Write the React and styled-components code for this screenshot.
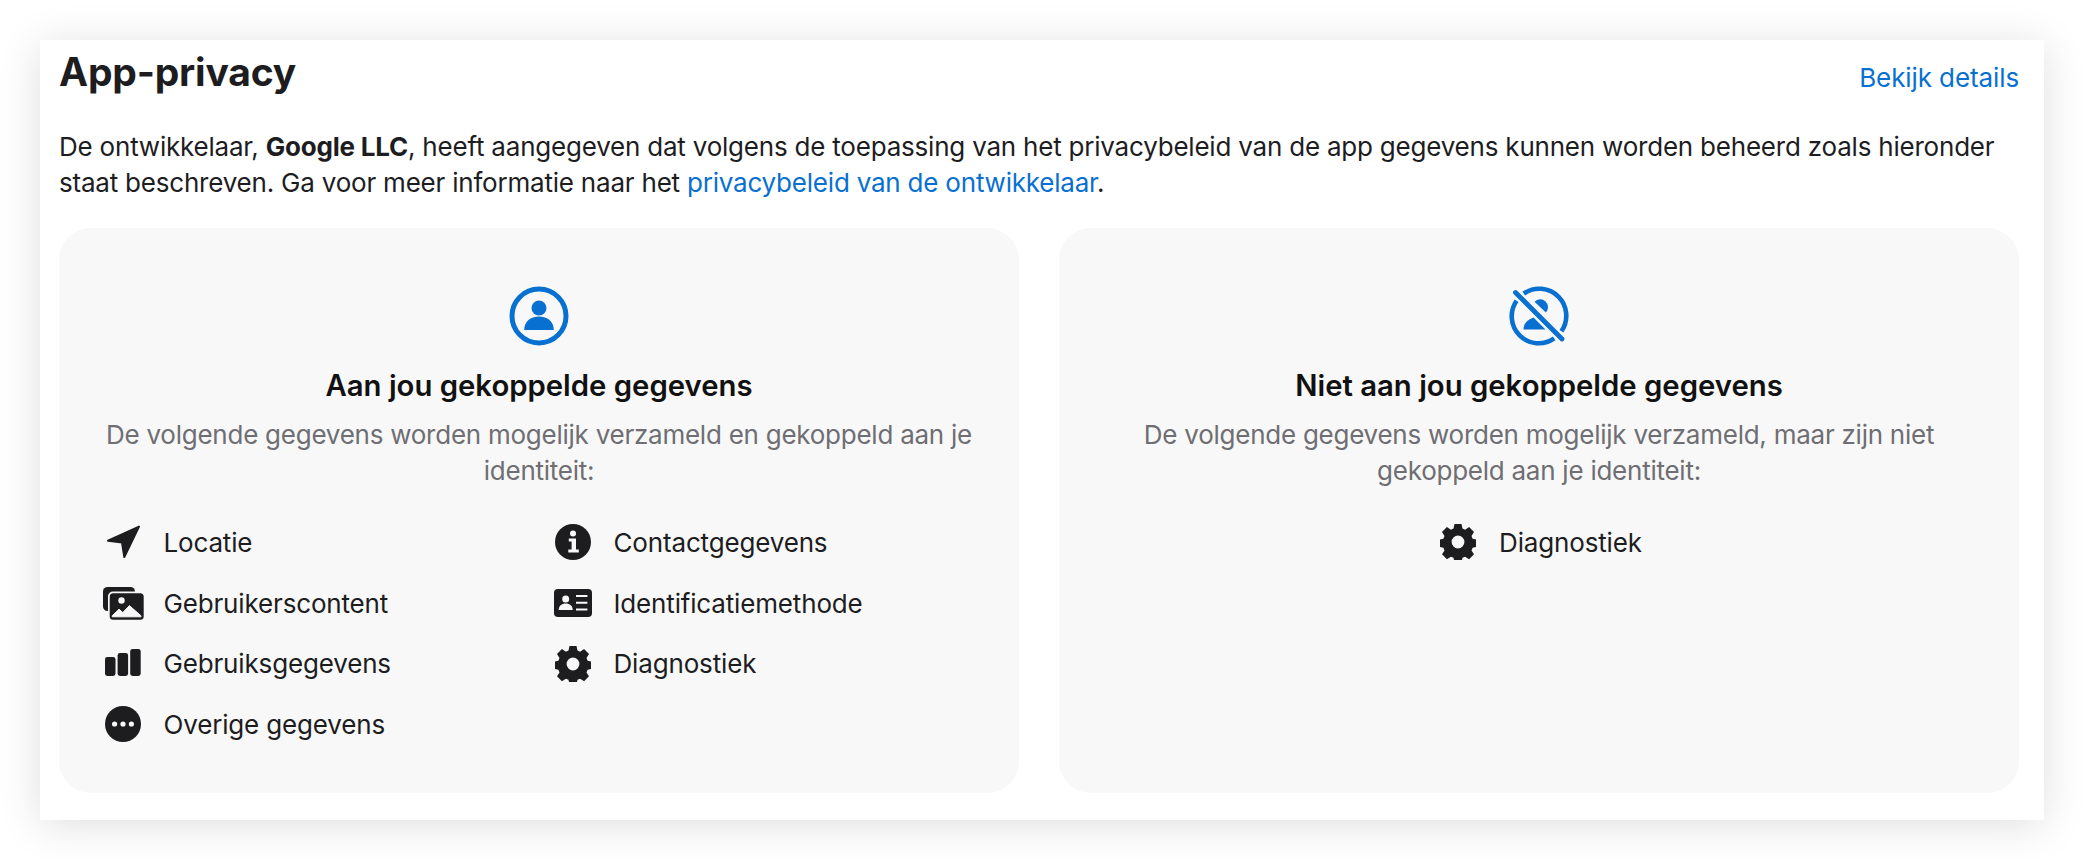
import React from 'react';
import styled, { createGlobalStyle } from 'styled-components';

const Global = createGlobalStyle`
  html, body { margin: 0; padding: 0; background: #fff; }
  body { font-family: Inter, "Noto Sans", "Liberation Sans", sans-serif; color: #1d1d1f; }
`;

const Ink = '#1d1d1f';
const Bg = '#f8f8f8';
const Blue = '#0870d1';

const LocationIcon = () => (
  <svg viewBox="0 0 36 36" width="36" height="36">
    <path d="M34 2.600 3 16.700 17 18.500l2.300 14.500z" fill={Ink} stroke={Ink} strokeWidth="2" strokeLinejoin="round" />
  </svg>
);

const PhotoIcon = () => (
  <svg viewBox="0 0 42 36" width="42" height="36">
    <rect x="1" y="2" width="32" height="24" rx="4.500" fill={Ink} />
    <rect x="6" y="6.500" width="37" height="30" rx="5" fill={Bg} />
    <rect x="7.700" y="8.300" width="34" height="26.400" rx="3.500" fill={Ink} />
    <circle cx="19.500" cy="15.500" r="3.200" fill={Bg} />
    <path d="M10.200 31.800v-1l6.800-6.600 3.800 3.400 6.600-7 11.600 10.200v1z" fill={Bg} stroke={Bg} strokeLinejoin="round" />
  </svg>
);

const BarsIcon = () => (
  <svg viewBox="0 0 36 36" width="36" height="36">
    <rect x="0" y="11" width="10.500" height="19" rx="2.400" fill={Ink} />
    <rect x="12.600" y="7" width="10.500" height="23" rx="2.400" fill={Ink} />
    <rect x="25.200" y="3" width="10.500" height="27" rx="2.400" fill={Ink} />
  </svg>
);

const DotsIcon = () => (
  <svg viewBox="0 0 36 36" width="36" height="36">
    <circle cx="18" cy="18" r="18" fill={Ink} />
    <circle cx="9.600" cy="18" r="2.600" fill={Bg} />
    <circle cx="18" cy="18" r="2.600" fill={Bg} />
    <circle cx="26.400" cy="18" r="2.600" fill={Bg} />
  </svg>
);

const InfoIcon = () => (
  <svg viewBox="0 0 36 36" width="36" height="36">
    <circle cx="18" cy="18" r="18" fill={Ink} />
    <circle cx="18" cy="9.600" r="3" fill={Bg} />
    <path d="M13.800 14.500h7.200v11h2.800v3H13.300v-3h3.300v-8h-2.800z" fill={Bg} />
  </svg>
);

const IdIcon = () => (
  <svg viewBox="0 0 38 28" width="38" height="28">
    <rect width="38" height="28" rx="4" fill={Ink} />
    <circle cx="11.700" cy="10" r="3.500" fill={Bg} />
    <path d="M4.700 21c0-4 3-6.400 7-6.400s7 2.400 7 6.400z" fill={Bg} />
    <path d="M22 6h11.400v2H22zM22 12.800h11.400v2H22zM22 19.400h11.400v2H22z" fill={Bg} />
  </svg>
);

const GearIcon = () => (
  <svg viewBox="0 0 36 36" width="36" height="36">
    <path
      fillRule="evenodd"
      fill={Ink}
      d="M14.500 0h7l1 4.600 2.600 1.100 4-2.600 4.900 5-2.500 3.900 1.100 2.700 4.400 1v7l-4.400 1-1.100 2.700 2.500 3.900-4.900 5-4-2.600-2.600 1.100-1 4.700h-7l-1-4.700-2.600-1.100-4 2.600-4.900-5 2.500-3.900-1.100-2.700-4.400-1v-7l4.400-1 1.100-2.700-2.500-3.900 4.900-5 4 2.600 2.600-1.100zM18 11.600a6.400 6.400 0 1 0 0 12.800 6.400 6.400 0 0 0 0-12.800z"
    />
  </svg>
);

const PersonIcon = () => (
  <svg viewBox="0 0 60 60" width="60" height="60">
    <circle cx="30" cy="30" r="27" fill="none" stroke={Blue} strokeWidth="5" />
    <circle cx="30" cy="22" r="7.500" fill={Blue} />
    <path d="M15.200 44c0-8.400 6.400-13.400 14.800-13.400S44.800 35.600 44.800 44z" fill={Blue} />
  </svg>
);

const PersonOffIcon = () => (
  <svg viewBox="0 0 60 60" width="60" height="60">
    <path d="M14.800 7.600A27 27 0 0 1 52.400 45.200M45.200 52.400A27 27 0 0 1 7.600 14.800" fill="none" stroke={Blue} strokeWidth="4.600" />
    <path d="M25.500 15.800a7.800 7.800 0 0 1 11.400 10.700z" fill={Blue} />
    <path d="M14.500 43.500c0-5.500 3.500-10 10-12l12 12z" fill={Blue} />
    <path d="M6.500 6.500 53 53" stroke={Blue} strokeWidth="4.800" strokeLinecap="round" />
  </svg>
);

const Page = styled.main`
  box-sizing: border-box;
  width: 2084px;
  height: 860px;
  padding: 40px;
  overflow: hidden;
`;

const Panel = styled.section`
  box-sizing: border-box;
  height: 780px;
  padding: 0 25px 0 19px;
  background: #fff;
  box-shadow: 0 5px 40px rgba(0, 0, 0, 0.13);
`;

const Head = styled.header`
  display: flex;
  justify-content: space-between;
  align-items: flex-start;
  height: 70px;
`;

const Title = styled.h2`
  margin: 0;
  font-size: 39px;
  line-height: 64px;
  font-weight: 700;
  color: #1d1d1f;
  letter-spacing: -0.2px;
`;

const Link = styled.a`
  color: ${Blue};
  font-size: 26px;
  letter-spacing: ${(p) => (p.$top ? '-0.1px' : 'inherit')};
  text-decoration: none;
  line-height: ${(p) => (p.$top ? '76px' : 'inherit')};
`;

const Intro = styled.p`
  margin: 0 0 27px;
  padding-top: 19px;
  font-size: 26px;
  line-height: 36px;
  letter-spacing: -0.21px;
  color: #1d1d1f;
  b { font-weight: 700; }
`;

const Cards = styled.div`
  display: grid;
  grid-template-columns: 960px 960px;
  gap: 40px;
`;

const Card = styled.article`
  box-sizing: border-box;
  height: 565px;
  padding: 57.500px 40px 0;
  background: ${Bg};
  border-radius: 32px;
  text-align: center;
`;

const HeroIcon = styled.div`
  display: flex;
  justify-content: center;
  height: 60px;
  margin-bottom: 18.500px;
`;

const CardTitle = styled.h3`
  margin: 0 0 9px;
  font-size: 29.300px;
  line-height: 44px;
  font-weight: 600;
  color: #111;
`;

const CardText = styled.p`
  margin: 0 0 23px;
  font-size: 26px;
  line-height: 36px;
  letter-spacing: -0.25px;
  color: #6e6e73;
`;

const List = styled.ul`
  list-style: none;
  margin: 0;
  padding: 0 0 0 ${(p) => (p.$single ? '0' : '1.5px')};
  display: grid;
  grid-template-columns: ${(p) => (p.$single ? 'max-content' : '450px 1fr')};
  justify-content: ${(p) => (p.$single ? 'center' : 'start')};
  grid-auto-rows: 60.700px;
  text-align: left;
`;

const Item = styled.li`
  display: flex;
  align-items: center;
  gap: 19px;
  font-size: 26px;
  letter-spacing: -0.16px;
  color: #1d1d1f;
`;

const IconBox = styled.span`
  display: flex;
  justify-content: center;
  align-items: center;
  width: 44px;
  height: 44px;
`;

const left = [
  [LocationIcon, 'Locatie'],
  [InfoIcon, 'Contactgegevens'],
  [PhotoIcon, 'Gebruikerscontent'],
  [IdIcon, 'Identificatiemethode'],
  [BarsIcon, 'Gebruiksgegevens'],
  [GearIcon, 'Diagnostiek'],
  [DotsIcon, 'Overige gegevens'],
];

export default function App() {
  return (
    <Page>
      <Global />
      <Panel>
        <Head>
          <Title>App-privacy</Title>
          <Link $top href="#">Bekijk details</Link>
        </Head>
        <Intro>
          De ontwikkelaar, <b>Google LLC</b>, heeft aangegeven dat volgens de toepassing van het privacybeleid van de app gegevens kunnen worden beheerd zoals hieronder staat beschreven. Ga voor meer informatie naar het <Link href="#">privacybeleid van de ontwikkelaar</Link>.
        </Intro>
        <Cards>
          <Card>
            <HeroIcon><PersonIcon /></HeroIcon>
            <CardTitle>Aan jou gekoppelde gegevens</CardTitle>
            <CardText>De volgende gegevens worden mogelijk verzameld en gekoppeld aan je identiteit:</CardText>
            <List>
              {left.map(([Icon, label]) => (
                <Item key={label}><IconBox><Icon /></IconBox>{label}</Item>
              ))}
            </List>
          </Card>
          <Card>
            <HeroIcon><PersonOffIcon /></HeroIcon>
            <CardTitle>Niet aan jou gekoppelde gegevens</CardTitle>
            <CardText>De volgende gegevens worden mogelijk verzameld, maar zijn niet gekoppeld aan je identiteit:</CardText>
            <List $single>
              <Item><IconBox><GearIcon /></IconBox>Diagnostiek</Item>
            </List>
          </Card>
        </Cards>
      </Panel>
    </Page>
  );
}
